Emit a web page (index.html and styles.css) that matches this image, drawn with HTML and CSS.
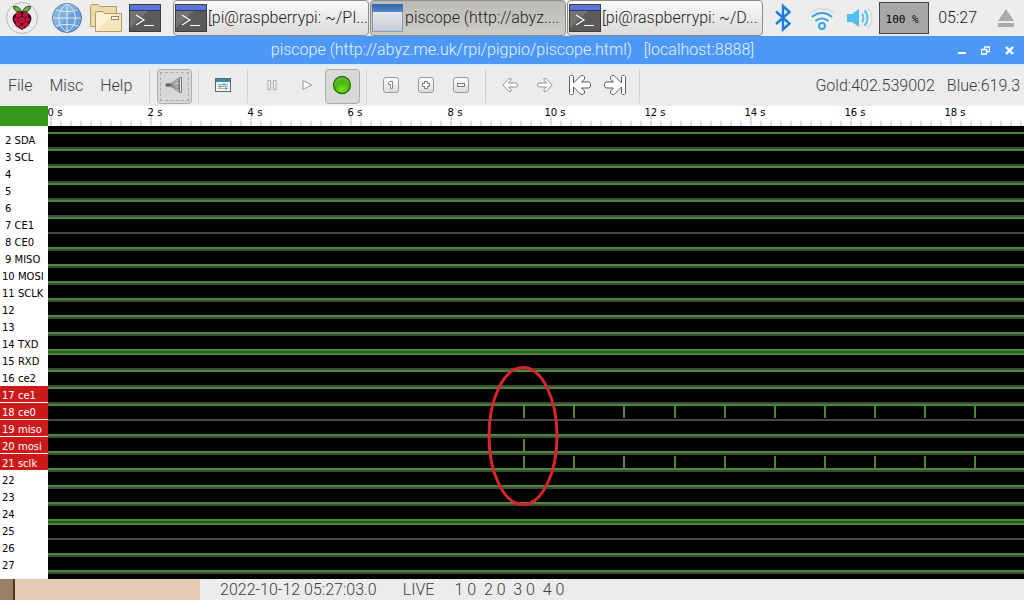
FILE: index.html
```html
<!DOCTYPE html>
<html lang="en">
<head>
<meta charset="utf-8">
<title>piscope</title>
<link rel="stylesheet" href="styles.css">
</head>
<body>
<svg class="defs" width="0" height="0" aria-hidden="true">
  <defs>
    <linearGradient id="winTitle" x1="0" y1="0" x2="0" y2="1"><stop offset="0" stop-color="#3465a4"/><stop offset="1" stop-color="#5288cc"/></linearGradient>
    <linearGradient id="winBody" x1="0" y1="0" x2="0" y2="1"><stop offset="0" stop-color="#f4f4f4"/><stop offset="1" stop-color="#c3cad4"/></linearGradient>
    <radialGradient id="led" cx=".5" cy=".8" r=".8"><stop offset="0" stop-color="#7fe01c"/><stop offset=".6" stop-color="#44b80c"/><stop offset="1" stop-color="#74bc58"/></radialGradient>
    <linearGradient id="key" x1="0" y1="0" x2="0" y2="1"><stop offset="0" stop-color="#fff"/><stop offset="1" stop-color="#dcdcdc"/></linearGradient>
    <linearGradient id="plug" x1="0" y1="0" x2="0" y2="1"><stop offset="0" stop-color="#eee"/><stop offset=".6" stop-color="#999"/><stop offset="1" stop-color="#ccc"/></linearGradient>
    <symbol id="terminal" viewBox="0 0 32 28">
      <rect x=".5" y=".5" width="31" height="27" fill="#5a5a5a" stroke="#3c3c3c"/>
      <path d="M1 6h19L1 24z" fill="#737373"/>
      <rect x="1" y="1" width="30" height="5" fill="#5b75dc"/>
      <path d="M0 6.500h32" stroke="#33375a"/>
      <path d="M7 11l8 5-8 5M15 21.500h10" fill="none" stroke="#fff" stroke-width="1.200"/>
    </symbol>
    <symbol id="arrow" viewBox="0 0 16 16"><path d="M.8 8L7 1.500l2 .3v1.400L6.500 6h7.500l1.500 1v2l-1.500 1H6.500L9 12.800v1.400l-2 .3z" fill="#fff" stroke="#8f8f8f"/></symbol>
    <symbol id="jump" viewBox="0 0 24 22"><path d="M2.500 1.500h2l1 1v6.500L13 1.500h2l1.500 1.500v2L13.500 8h7.500l1.500 1.500v3L21 14h-7.500l3 3v2L15 20.500h-2L5.500 13v6.500l-1 1h-2l-1-1v-17z" fill="#fff" stroke="#5c5c5c" stroke-linejoin="round"/></symbol>
  </defs>
</svg>

<header class="panel">
  <button class="launch launch-menu" aria-label="Menu">
    <svg width="36" height="36" viewBox="4 0 36 36">
      <circle cx="22" cy="18" r="15.500" fill="#eceeee" stroke="#b4bcc0"/>
      <path d="M21.500 12c-1-4-4-6-8-5.500 0 3.500 3 6 8 5.500zM22.500 12c1-4 4-6 8-5.500 0 3.500-3 6-8 5.500z" fill="#6cb33f" stroke="#1c3a10"/>
      <path d="M15 14c2-3 5-3 7-2 2-1 5-1 7 2 3 2 3 6 1 9-2 4-5 5-8 7-3-2-6-3-8-7-2-3-2-7 1-9z" fill="#2a0710"/>
      <g fill="#c01440"><circle cx="22" cy="20" r="3.200"/><circle cx="18.500" cy="14.800" r="2.700"/><circle cx="25.500" cy="14.800" r="2.700"/><circle cx="16.300" cy="19.500" r="2.400"/><circle cx="27.700" cy="19.500" r="2.400"/><circle cx="18" cy="24.300" r="2.700"/><circle cx="26" cy="24.300" r="2.700"/><circle cx="22" cy="27" r="2.300"/></g>
    </svg>
  </button>
  <button class="launch" aria-label="Web browser">
    <svg width="36" height="36" viewBox="49 0 36 36">
      <circle cx="67" cy="18" r="14.500" fill="#6b9fd8" stroke="#4a78a8"/>
      <path d="M57 28A14 14 0 0 1 77 8z" fill="#86b2e2"/>
      <path d="M67 4v28M53 18h28M56 10c6 2 16 2 22 0M56 26c6-2 16-2 22 0M67 4c-11 7-11 21 0 28M67 4c11 7 11 21 0 28" fill="none" stroke="#dce9f6"/>
    </svg>
  </button>
  <button class="launch" aria-label="File manager">
    <svg width="36" height="36" viewBox="88 0 36 36">
      <path d="M90.500 26.500V6l1.500-1.500h6l1.500 2h17v20z" fill="#ecdcaa" stroke="#b29a66"/>
      <path d="M95.500 31.500V13l1.500-1.500h6l1.500 2h17v18z" fill="#f3e6bb" stroke="#b29a66"/>
      <path d="M96 31V13h7l1.500 1H114z" fill="#fbf3d4"/>
      <rect x="111.500" y="16.500" width="7" height="3" fill="#fff" stroke="#9c8654"/>
    </svg>
  </button>
  <button class="launch" aria-label="Terminal"><svg width="32" height="28"><use href="#terminal"/></svg></button>
  <nav class="tasks" aria-label="Windows">
    <button class="task"><svg width="32" height="28"><use href="#terminal"/></svg><span>[pi@raspberrypi: ~/PI...</span></button>
    <button class="task task-active"><svg width="31" height="28" viewBox="0 0 31 28"><rect x=".5" y=".5" width="30" height="27" fill="url(#winBody)" stroke="#8c9db4"/><rect width="31" height="8" fill="url(#winTitle)"/></svg><span>piscope (http://abyz....</span></button>
    <button class="task"><svg width="32" height="28"><use href="#terminal"/></svg><span>[pi@raspberrypi: ~/D...</span></button>
  </nav>
  <div class="tray">
    <button class="tray-item" aria-label="Bluetooth"><svg width="38" height="36" viewBox="763 0 38 36"><path d="M775 11.500l13.500 12-6.500 6V6l6.500 6-13.500 12" fill="none" stroke="#1a7fe0" stroke-width="2.400"/></svg></button>
    <button class="tray-item" aria-label="Wi-Fi"><svg width="40" height="36" viewBox="801 0 40 36"><g fill="none" stroke-width="2"><path d="M809 13.500c7-6.500 17-6.500 24 0" stroke="#dcdcdc"/><path d="M811 17c6-5.500 14-5.500 20 0M814.500 21c4-3.500 9-3.500 13 0" stroke="#38a4dc"/><circle cx="821" cy="26" r="3" stroke="#38a4dc"/></g></svg></button>
    <button class="tray-item" aria-label="Volume"><svg width="37" height="36" viewBox="841 0 37 36"><path d="M846 14h5l7-5v18l-7-5h-5z" fill="#55bdf0"/><g fill="none" stroke-width="2"><path d="M861 14c2 2 2 6 0 8M863.500 10.500c4 4 4 11 0 15" stroke="#55bdf0"/><path d="M867 8.500c5 5 5 14 0 19" stroke="#dcdcdc"/></g></svg></button>
    <div class="cpu">100 %</div>
    <time class="clock">05:27</time>
    <button class="tray-item eject" aria-label="Eject"><svg width="16" height="18" viewBox="0 0 16 18"><path d="M8 0l8 12H0zM0 14h16v4H0z" fill="#aaa"/></svg></button>
  </div>
</header>

<div class="titlebar">
  <h1 class="title">piscope (http://abyz.me.uk/rpi/pigpio/piscope.html)&nbsp;&nbsp; [localhost:8888]</h1>
  <div class="controls">
    <button aria-label="Minimise"><svg width="9" height="9"><path d="M1 7h8" stroke="#fff" stroke-width="2"/></svg></button>
    <button aria-label="Restore"><svg width="9" height="9"><path d="M3.500 3V1h5v4.500H6M.5 3.500h5v4.500h-5z" fill="none" stroke="#fff" stroke-width="1.300"/></svg></button>
    <button aria-label="Close"><svg width="9" height="9"><path d="M1 1l7 7M8 1L1 8" stroke="#fff" stroke-width="2.400"/></svg></button>
  </div>
</div>

<div class="toolbar">
  <nav class="menus" aria-label="Menu bar"><button>File</button><button>Misc</button><button>Help</button></nav>
  <span class="sep"></span>
  <button class="tool tool-on tool-focus" aria-label="Connect"><svg width="18" height="18" viewBox="0 0 18 18"><path d="M1 7.500h4C9 7 9.500 3.500 14 2.500v13C9.500 14.500 9 11 5 10.500H1z" fill="#d0d0cc" stroke="#8a8a86"/><path d="M6 9c3-1 4-4 8-4v8c-4 0-5-2-8-4z" fill="url(#plug)" stroke="#6c6c6a"/><path d="M1 9h5" stroke="#666" stroke-width="2"/><path d="M14.500 1.500h2v15h-2z" fill="#eee" stroke="#777"/></svg></button>
  <span class="sep"></span>
  <button class="tool" aria-label="Settings"><svg width="16" height="14" viewBox="0 0 16 14"><rect x=".5" y=".5" width="15" height="13" fill="#f2f6f6" stroke="#56686c"/><path d="M1 1h14v3H1z" fill="#3a8fa4"/><path d="M3 6.500h10M3 8.500h10M3 10.500h10" stroke="#9aaeb0"/><path d="M9 5.500v2M5 7.500v2M11 9.500v2" stroke="#2a7878"/></svg></button>
  <span class="sep"></span>
  <button class="tool" aria-label="Pause"><svg width="10" height="10"><path d="M1 .5h2.500v9H1zM6.500.5H9v9H6.500z" fill="#fff" stroke="#a4a4a4"/></svg></button>
  <button class="tool" aria-label="Play"><svg width="10" height="12"><path d="M1 1.500l8.500 4.500L1 10.500z" fill="#fff" stroke="#999"/></svg></button>
  <button class="tool tool-on" aria-label="Live"><svg width="20" height="20"><circle cx="10" cy="10" r="8.500" fill="url(#led)" stroke="#287008" stroke-width="1.300"/></svg></button>
  <span class="sep"></span>
  <button class="tool" aria-label="Zoom 1:1"><svg width="16" height="16"><rect x=".5" y=".5" width="15" height="15" rx="2.500" fill="url(#key)" stroke="#999"/><path d="M5.500 5.500l1-1h3v7h-2v-4h-2z" fill="#fff" stroke="#888"/></svg></button>
  <button class="tool" aria-label="Zoom in"><svg width="16" height="16"><rect x=".5" y=".5" width="15" height="15" rx="2.500" fill="url(#key)" stroke="#999"/><path d="M6.500 4.500h3v2h2v3h-2v2h-3v-2h-2v-3h2z" fill="#fff" stroke="#777"/></svg></button>
  <button class="tool" aria-label="Zoom out"><svg width="16" height="16"><rect x=".5" y=".5" width="15" height="15" rx="2.500" fill="url(#key)" stroke="#999"/><path d="M4.500 6.500h7v3h-7z" fill="#fff" stroke="#777"/></svg></button>
  <span class="sep"></span>
  <button class="tool" aria-label="Back"><svg width="16" height="16"><use href="#arrow"/></svg></button>
  <button class="tool" aria-label="Forward"><svg class="flip" width="16" height="16"><use href="#arrow"/></svg></button>
  <button class="tool" aria-label="Go to start"><svg width="24" height="22"><use href="#jump"/></svg></button>
  <button class="tool" aria-label="Go to end"><svg class="flip" width="24" height="22"><use href="#jump"/></svg></button>
  <span class="sep"></span>
  <div class="markers"><span>Gold:402.539002</span><span>Blue:619.3</span></div>
</div>

<main class="scope">
  <div class="side">
    <div class="state"></div>
    <ul class="pins">
      <li class="short">2 SDA</li><li class="short">3 SCL</li><li class="short">4</li><li class="short">5</li><li class="short">6</li><li class="short">7 CE1</li><li class="short">8 CE0</li><li class="short">9 MISO</li><li>10 MOSI</li><li>11 SCLK</li><li>12</li><li>13</li><li>14 TXD</li><li>15 RXD</li><li>16 ce2</li><li class="picked">17 ce1</li><li class="picked">18 ce0</li><li class="picked">19 miso</li><li class="picked">20 mosi</li><li class="picked">21 sclk</li><li>22</li><li>23</li><li>24</li><li>25</li><li>26</li><li>27</li>
    </ul>
  </div>
  <div class="view">
    <div class="ruler"><span>0 s</span><span>2 s</span><span>4 s</span><span>6 s</span><span>8 s</span><span>10 s</span><span>12 s</span><span>14 s</span><span>16 s</span><span>18 s</span></div>
    <div class="plot">
      <div class="lane high"></div><div class="lane high"></div><div class="lane high"></div><div class="lane high"></div><div class="lane high"></div><div class="lane high edge"></div>
      <div class="lane low"></div><div class="lane low"></div><div class="lane low"></div><div class="lane low"></div><div class="lane low"></div><div class="lane low"></div><div class="lane low both"></div>
      <div class="lane high"></div><div class="lane high"></div><div class="lane high"></div>
      <div class="lane high edge"><svg width="976" height="12"><path d="M476 0v12M526 0v12M576 0v12M627 0v12M677 0v12M727 0v12M777 0v12M827 0v12M877 0v12M927 0v12"/></svg></div>
      <div class="lane low"></div>
      <div class="lane low"><svg width="976" height="12"><path d="M476 0v12"/></svg></div>
      <div class="lane low"><svg width="976" height="12"><path d="M476 0v12M526 0v12M576 0v12M627 0v12M677 0v12M727 0v12M777 0v12M827 0v12M877 0v12M927 0v12"/></svg></div>
      <div class="lane low"></div><div class="lane low"></div><div class="lane low both"></div>
      <div class="lane high edge"></div><div class="lane low"></div><div class="lane low"></div>
      <svg class="callout" width="74" height="142"><ellipse cx="37" cy="71" rx="34" ry="68.500" fill="none" stroke="#d8242c" stroke-width="3"/></svg>
    </div>
  </div>
</main>

<footer class="status">
  <div class="desktop"></div>
  <span class="date">2022-10-12 05:27:03.0</span><span class="mode">LIVE</span><span class="counts">1 0&nbsp; 2 0&nbsp; 3 0&nbsp; 4 0</span>
</footer>
</body>
</html>
```
FILE: styles.css
```css
* { box-sizing: border-box; }
body { margin: 0; min-height: 100vh; display: flex; flex-direction: column; overflow: hidden; background: #ececec; color: #3c3c3c; font: 300 16px/20px Roboto, "Liberation Sans", sans-serif; }
button { margin: 0; padding: 0; border: 0; background: none; color: inherit; font: inherit; }
svg { display: block; flex: none; }
.defs { position: absolute; }
.flip { transform: scaleX(-1); }

.panel { display: flex; height: 36px; background: #ededec; color: #1c1c1c; }
.launch { width: 39px; display: flex; align-items: center; justify-content: center; }
.launch-menu { width: 47px; padding-right: 3px; }
.tasks { flex: 1 1 auto; display: flex; gap: 1px; margin-left: 9px; min-width: 0; max-width: 590px; }
.task { flex: 1 1 0; min-width: 0; display: flex; align-items: center; gap: 1px; padding-left: 1px; border: 1px solid #8c8c88; border-radius: 4px; background: linear-gradient(#fafafa, #dcdad8); white-space: nowrap; overflow: hidden; }
.task-active { background: linear-gradient(#bdbbb8, #cfcdca); }
.task-active span { margin-left: 1px; }
.tray { display: flex; align-items: center; margin-left: auto; }
.cpu { width: 50px; height: 32px; border: 1px solid #444; background: #a8a8a8; color: #000; font: 11px/34px "DejaVu Sans Mono", monospace; text-align: center; padding-right: 4px; }
.clock { margin: 0 21px 0 9px; }
.eject { margin-right: 10px; }

.titlebar { display: flex; align-items: center; height: 28px; background: #4d98f5; color: #e4f2ff; }
.title { flex: 1; margin: 0; padding-left: 68px; font: inherit; text-align: center; white-space: nowrap; }
.controls { display: flex; gap: 15px; padding-right: 10px; }

.toolbar { display: flex; align-items: center; height: 42px; border-top: 2px solid #d8ebfb; white-space: nowrap; }
.menus { display: flex; gap: 17px; width: 143px; padding-left: 8px; }
.sep { width: 1px; height: 34px; margin: 0 7px 0 6px; background: #d2d2d2; }
.tool { width: 35px; height: 35px; display: flex; align-items: center; justify-content: center; padding: 0 2px 2px 0; border: 1px solid transparent; border-radius: 4px; }
.tool-on { border-color: #adadab; background: #d8d8d6; }
.tool-focus { outline: 1px dashed #aaa; outline-offset: -4px; }
.markers { display: flex; gap: 12px; margin-left: auto; padding-right: 4px; }

.scope { display: flex; font-family: "DejaVu Sans", sans-serif; font-weight: 400; font-size: 10px; color: #000; }
.side { width: 48px; flex: none; background: #fff; }
.state { height: 20px; background: #33991a; }
.pins { list-style: none; margin: 0; padding: 5px 0 6px; }
.pins li { height: 16px; margin-bottom: 1px; padding-left: 2px; line-height: 20px; white-space: nowrap; }
.pins .short { padding-left: 5px; }
.pins .picked { background: #cc1a1a; color: #fff; }

.view { flex: 1; min-width: 0; display: flex; flex-direction: column; }
.ruler { display: flex; height: 20px; overflow: hidden; background: repeating-linear-gradient(90deg, #ddd 0 2px, transparent 2px 100px) 2px 10px / 1000px 10px no-repeat, repeating-linear-gradient(90deg, #ddd 0 2px, transparent 2px 10px) 2px 15px / 2000px 5px no-repeat, #fff; line-height: 14px; }
.ruler span { flex: 0 0 100px; text-align: center; }
.ruler span:first-child { margin-left: -43px; }
.plot { position: relative; flex: 1; padding-top: 6px; background: #000; overflow: hidden; }
.lane { height: 17px; border-bottom: 2px solid #3c4c38; overflow: hidden; }
.high { border-top: 2px solid #4a8838; }
.low { padding-top: 1px; background: linear-gradient(#4a8838, #4a8838) 0 13px / 100% 2px no-repeat; }
.edge { border-bottom-color: #484848; }
.both { border-bottom-color: #285c1c; }
.lane path { stroke: #4a8838; stroke-width: 2; }
.callout { position: absolute; left: 438px; top: 239px; }

.status { flex: 1; min-height: 21px; display: flex; align-items: center; background: #ececec; line-height: 21px; }
.desktop { align-self: stretch; width: 200px; margin-right: 20px; background: #e4cbb3; border-left: 13px solid #9a8067; box-shadow: inset 2px 0 #50331a; }
.mode { margin-left: 26px; }
.counts { margin-left: 20px; }
```
